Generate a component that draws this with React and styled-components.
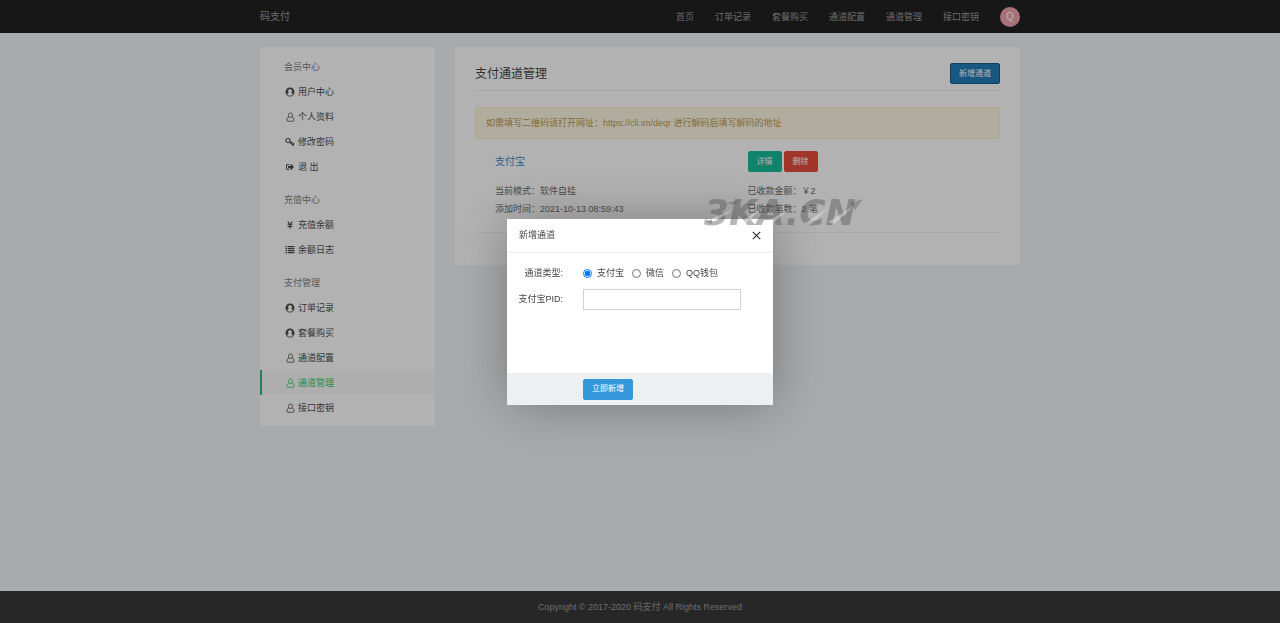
import React, { useState } from 'react';
import styled, { createGlobalStyle, css } from 'styled-components';
import { FaSignOutAlt, FaYenSign } from 'react-icons/fa';

const UserCircle=()=>(
    <svg width="10" height="10" viewBox="0 0 20 20">
        <path fill="currentColor" fillRule="evenodd" d="M10 1a9 9 0 1 0 0 18a9 9 0 0 0 0-18zM10 4.2a3.9 4.2 0 0 1 2.3 7.5c2 .5 3 1.800 3.200 3.500a7.600 7.600 0 0 1-11 0c.2-1.700 1.200-3 3.200-3.500a3.900 4.200 0 0 1 2.300-7.500z" />
    </svg>
);

const UserOutline=()=>(
    <svg width="9" height="10" viewBox="0 0 18 20" fill="none" stroke="currentColor" strokeWidth="1.6">
        <path d="M5.500 10C3 10.500 2 13 2 16.500Q2 18.500 4 18.500H14Q16 18.500 16 16.500C16 13 15 10.500 12.500 10" />
        <ellipse cx="9" cy="6.500" rx="4" ry="4.700" />
    </svg>
);

const KeyIcon=()=>(
    <svg width="10" height="10" viewBox="0 0 20 20" fill="none" stroke="currentColor" strokeWidth="2.400">
        <ellipse cx="6" cy="7" rx="4.300" ry="4" />
        <path d="M9 10 L17.500 17.500 M12.500 13 L15 10 M15.500 15.500 L18.500 12.500" />
    </svg>
);

const ListIcon=()=>(
    <svg width="10" height="9" viewBox="0 0 20 18" fill="currentColor">
        <path d="M1 2h3v2.500H1zM1 6h3v2.500H1zM1 10h3v2.500H1zM1 14h3v2.500H1zM5.500 2H19v2.500H5.500zM5.500 6H19v2.500H5.500zM5.500 10H19v2.500H5.500zM5.500 14H19v2.500H5.500z" />
    </svg>
);

const navLinks=['首页', '订单记录', '套餐购买', '通道配置', '通道管理', '接口密钥'];

const menu=[
    {
        title:'会员中心',
        items:[
            { name:'用户中心', Icon:UserCircle },
            { name:'个人资料', Icon:UserOutline },
            { name:'修改密码', Icon:KeyIcon },
            { name:'退 出', Icon:FaSignOutAlt },
        ],
    },
    {
        title:'充值中心',
        items:[
            { name:'充值余额', Icon:FaYenSign },
            { name:'余额日志', Icon:ListIcon },
        ],
    },
    {
        title:'支付管理',
        items:[
            { name:'订单记录', Icon:UserCircle },
            { name:'套餐购买', Icon:UserCircle },
            { name:'通道配置', Icon:UserOutline },
            { name:'通道管理', Icon:UserOutline, active:true },
            { name:'接口密钥', Icon:UserOutline },
        ],
    },
];

const types=['支付宝', '微信', 'QQ钱包'];

const Sidebar=()=>(
    <Side>
        {menu.map(group=>(
            <Group key={group.title}>
                <GroupTitle>{group.title}</GroupTitle>
                <MenuList>
                    {group.items.map(({ name, Icon, active })=>(
                        <li key={name}>
                            <MenuLink href="#" $active={active}>
                                <IconBox><Icon /></IconBox>
                                {name}
                            </MenuLink>
                        </li>
                    ))}
                </MenuList>
            </Group>
        ))}
    </Side>
);

const AddDialog=({ onClose })=>{
    const [type, setType]=useState('支付宝');
    const [pid, setPid]=useState('');

    return(
        <Dialog role="dialog" aria-labelledby="dialog-title">
            <DialogHead>
                <DialogTitle id="dialog-title">新增通道</DialogTitle>
                <Close type="button" aria-label="关闭" onClick={onClose}>
                    <svg width="9" height="9" viewBox="0 0 9 9" stroke="currentColor" strokeWidth="1.2">
                        <path d="M0.8 0.8 L8.2 8.2 M8.2 0.8 L0.8 8.2" />
                    </svg>
                </Close>
            </DialogHead>
            <DialogBody>
                <Field>
                    <FieldName id="type-label">通道类型:</FieldName>
                    <Options role="radiogroup" aria-labelledby="type-label">
                        {types.map(el=>(
                            <Option key={el}>
                                <Radio  type="radio"
                                        name="type"
                                        checked={type===el}
                                        onChange={()=>setType(el)}
                                />
                                {el}
                            </Option>
                        ))}
                    </Options>
                </Field>
                <Field>
                    <FieldName as="label" htmlFor="pid">支付宝PID:</FieldName>
                    <TextInput id="pid" type="text" value={pid} onChange={(ev)=>setPid(ev.target.value)} />
                </Field>
            </DialogBody>
            <DialogFoot>
                <Button type="button" $color="#3498db">立即新增</Button>
            </DialogFoot>
        </Dialog>
    );
};

const App=()=>{
    const [open, setOpen]=useState(true);

    return(
        <Page>
            <GlobalStyles />
            <Header>
                <Container>
                    <Brand href="#">码支付</Brand>
                    <Nav>
                        {navLinks.map(el=><NavLink href="#" key={el}>{el}</NavLink>)}
                        <Avatar>Q</Avatar>
                    </Nav>
                </Container>
            </Header>
            <Content>
                <Sidebar />
                <Main>
                    <MainHead>
                        <Title>支付通道管理</Title>
                        <Button type="button" $color="#217dbb" $border="#175a87" onClick={()=>setOpen(true)}>新增通道</Button>
                    </MainHead>
                    <Alert>如需填写二维码请打开网址：https://cli.im/deqr 进行解码后填写解码的地址</Alert>
                    <Channel>
                        <ChannelName href="#">支付宝</ChannelName>
                        <Actions>
                            <Button type="button" $color="#18bc9c">详情</Button>
                            <Button type="button" $color="#e74c3c">删除</Button>
                        </Actions>
                        <Details>
                            <p>当前模式：软件自挂</p>
                            <p>添加时间：2021-10-13 08:59:43</p>
                        </Details>
                        <Details>
                            <p>已收款金额：￥2</p>
                            <p>已收款笔数：2 笔</p>
                        </Details>
                    </Channel>
                </Main>
            </Content>
            <Footer>Copyright © 2017-2020 码支付 All Rights Reserved</Footer>
            {open && (
                <Shade>
                    <AddDialog onClose={()=>setOpen(false)} />
                </Shade>
            )}
            <Watermark>
                3KA.CN
                <Streaks viewBox="0 0 160 32">
                    <path fill="rgba(255,255,255,.35)" d="M4 23 L30 12 L10 25 Z M34 27 L60 9 L40 28 Z M60 26 L86 12 L66 28 Z M100 27 L126 10 L106 28 Z M124 25 L150 9 L130 27 Z" />
                    <path fill="rgba(80,80,80,.35)" d="M22 6 L36 3 L30 8 Z M146 6 L159 2 L151 13 Z M2 25 L8 22 L8 27 Z" />
                </Streaks>
            </Watermark>
        </Page>
    );
};

const GlobalStyles=createGlobalStyle`
    *{
        box-sizing:border-box;
    }
    body{
        margin:0;
        background:#f1f4f6;
        color:#555;
        font-family:"Liberation Sans", "Noto Sans CJK SC", sans-serif;
        font-size:9px;
        line-height:18px;
    }
    h1, h2, p, ul{
        margin:0;
        padding:0;
        font-weight:normal;
    }
    a{
        text-decoration:none;
    }
    button, input{
        font-family:inherit;
    }
`;

const Page=styled.div`
    display:flex;
    flex-direction:column;
    min-height:100vh;
    position:relative;
`;

const Header=styled.header`
    background:#222;
`;

const Container=styled.div`
    display:flex;
    align-items:center;
    justify-content:space-between;
    max-width:760px;
    height:33px;
    margin:0 auto;
`;

const Brand=styled.a`
    color:#9d9d9d;
    font-size:10px;
`;

const Nav=styled.nav`
    display:flex;
    align-items:center;
    gap:21px;
`;

const NavLink=styled.a`
    color:#9d9d9d;
`;

const Avatar=styled.span`
    width:20px;
    height:20px;
    border-radius:50%;
    background:#f0a3ac;
    color:#fff;
    font-size:10px;
    line-height:20px;
    text-align:center;
`;

const Content=styled.div`
    flex:1;
    display:flex;
    align-items:flex-start;
    gap:20px;
    width:100%;
    max-width:760px;
    margin:0 auto;
    padding:14px 0 20px;
`;

const Side=styled.aside`
    width:175px;
    flex-shrink:0;
    background:#fff;
    padding:8px 0 6px;
`;

const Group=styled.section`
    & + &{
        margin-top:9px;
    }
`;

const GroupTitle=styled.h2`
    padding-left:24px;
    color:#808080;
    font-size:9px;
    line-height:24px;
`;

const MenuList=styled.ul`
    list-style:none;
`;

const MenuLink=styled.a`
    display:flex;
    align-items:center;
    gap:3px;
    height:25px;
    padding-left:23px;
    border-left:2px solid transparent;
    color:#4c4c4c;
    ${({ $active })=>$active && css`
        background:#fafafa;
        border-color:#2ebc78;
        color:#2ecc71;
    `}
`;

const IconBox=styled.span`
    display:flex;
    justify-content:center;
    width:10px;
    font-size:8px;
`;

const Main=styled.main`
    flex:1;
    background:#fff;
    padding:16px 20px 32px;
`;

const MainHead=styled.div`
    display:flex;
    align-items:center;
    justify-content:space-between;
    padding-bottom:6px;
    border-bottom:1px solid #f0f0f0;
`;

const Title=styled.h1`
    color:#444;
    font-size:12px;
`;

const Button=styled.button`
    height:21px;
    padding:0 8px;
    border:1px solid ${({ $border, $color })=>$border || $color};
    border-radius:2px;
    background:${({ $color })=>$color};
    color:#fff;
    font-size:8px;
    line-height:18px;
    cursor:pointer;
`;

const Alert=styled.div`
    margin-top:16px;
    padding:6px 10px;
    background:#fcf8e3;
    border:1px solid #faf0cc;
    border-radius:2px;
    color:#c09853;
`;

const Channel=styled.section`
    display:grid;
    grid-template-columns:1fr 1fr;
    row-gap:10px;
    align-items:center;
    padding:12px 0 14px 20px;
    border-bottom:1px solid #f0f0f0;
`;

const ChannelName=styled.a`
    color:#428bca;
    font-size:10px;
`;

const Actions=styled.div`
    display:flex;
    gap:2px;
`;

const Details=styled.div`
    color:#6c6c6c;
`;

const Footer=styled.footer`
    padding:7px 0;
    background:#393939;
    color:#9d9d9d;
    text-align:center;
`;

const Shade=styled.div`
    position:fixed;
    inset:0;
    display:flex;
    align-items:center;
    justify-content:center;
    background:rgba(0,0,0,.3);
`;

const Dialog=styled.div`
    width:266px;
    background:#fff;
    color:#444;
    box-shadow:1px 1px 50px rgba(0,0,0,.3);
`;

const DialogHead=styled.div`
    display:flex;
    align-items:center;
    justify-content:space-between;
    height:34px;
    padding:0 12px;
    border-bottom:1px solid #eee;
`;

const DialogTitle=styled.h2`
    font-size:9px;
`;

const Close=styled.button`
    display:flex;
    padding:0;
    border:none;
    background:none;
    color:#333;
    cursor:pointer;
`;

const DialogBody=styled.div`
    display:flex;
    flex-direction:column;
    gap:5px;
    min-height:120px;
    padding:10px 32px 0 0;
`;

const Field=styled.div`
    display:flex;
    align-items:center;
    gap:20px;
    height:21px;
`;

const FieldName=styled.span`
    width:56px;
    flex-shrink:0;
    text-align:right;
`;

const Options=styled.div`
    display:flex;
    gap:8px;
`;

const Option=styled.label`
    display:flex;
    align-items:center;
    gap:5px;
`;

const Radio=styled.input`
    width:9px;
    height:9px;
    margin:0;
`;

const TextInput=styled.input`
    flex:1;
    min-width:0;
    height:21px;
    padding:0 6px;
    border:1px solid #d2d2d2;
    font-size:9px;
`;

const DialogFoot=styled.div`
    height:32px;
    padding:6px 0 0 76px;
    background:#ecf0f1;
`;

const Watermark=styled.div`
    position:absolute;
    top:197px;
    left:calc(50% + 64px);
    color:rgba(80,80,80,.42);
    font-family:"DejaVu Sans", sans-serif;
    font-size:36px;
    font-weight:bold;
    font-style:italic;
    line-height:32px;
    pointer-events:none;
`;

const Streaks=styled.svg`
    position:absolute;
    top:0;
    left:0;
    width:160px;
    height:32px;
`;

export default App;
